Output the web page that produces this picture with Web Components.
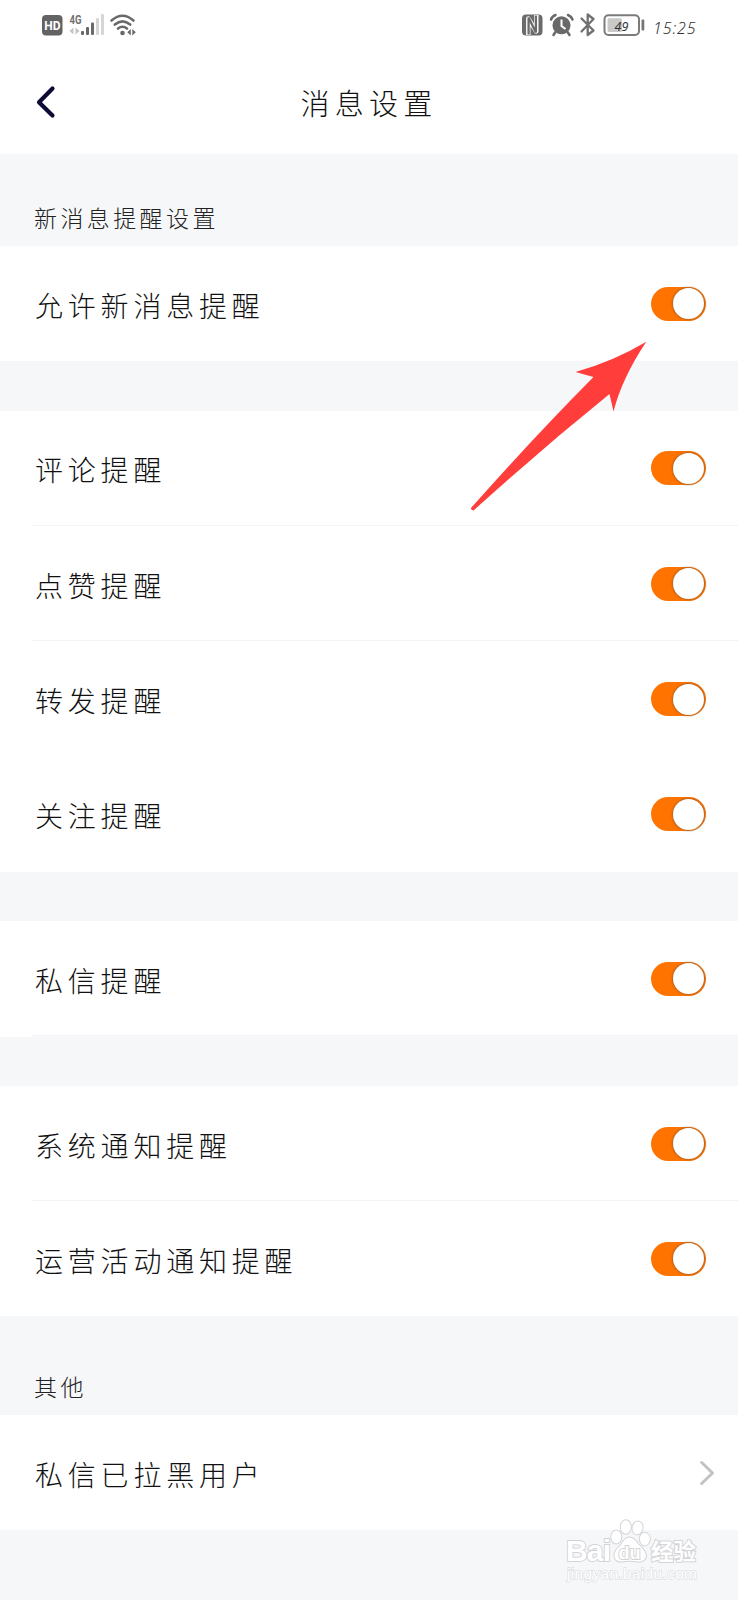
<!DOCTYPE html>
<html lang="zh-CN">
<head>
<meta charset="utf-8">
<title>消息设置</title>
<style>
html,body{margin:0;padding:0;background:#f6f7f9}
body{width:738px;height:1600px;overflow:hidden;font-family:"Noto Sans CJK SC","Noto Sans",sans-serif}
</style>
</head>
<body>
<settings-page></settings-page>
<script>
const define = (name, html) => customElements.define(name, class extends HTMLElement {
  constructor() {
    super();
    const t = document.createElement('template');
    t.innerHTML = html;
    this.attachShadow({mode: 'open'}).append(t.content.cloneNode(true));
  }
});

define('status-bar', `
<style>
:host{display:flex;justify-content:space-between;height:50px;padding:0 41px 0 42px;box-sizing:border-box}
svg{display:block}
.right{display:flex}
time{font:italic 300 16px/20px "Noto Sans",sans-serif;letter-spacing:.9px;color:#333;margin:18px 0 0 8px;width:44px;white-space:nowrap}
</style>
<svg width="96" height="50" viewBox="42 0 96 50">
  <rect x="42" y="15" width="20.5" height="20.5" rx="4" fill="#636363"/>
  <text x="52.3" y="29.6" font-family="Roboto,sans-serif" font-size="12" font-weight="700" fill="#fff" text-anchor="middle">HD</text>
  <text x="69.5" y="23.5" font-family="Roboto,sans-serif" font-size="13" font-weight="700" fill="#707070" textLength="12" lengthAdjust="spacingAndGlyphs">4G</text>
  <path d="M73.5 27.5v7l-4-3.5zM75.5 27.5v7l4-3.5z" fill="#c4c4c4"/>
  <g fill="#696969"><rect x="81" y="31" width="3" height="4" rx="1"/><rect x="86" y="27" width="3" height="8" rx="1"/><rect x="91" y="22.5" width="3" height="12.5" rx="1"/></g>
  <g fill="#d6d6d6"><rect x="96" y="18" width="3" height="17" rx="1"/><rect x="101" y="14" width="3" height="21" rx="1"/></g>
  <g fill="none" stroke="#696969" stroke-width="2.6" stroke-linecap="round"><path d="M111.5 20.5Q122.5 11 133.5 20.5"/><path d="M114.800 24.600Q122.500 18 130.200 24.600"/><path d="M118 28.500Q122.500 25 127 28.500"/></g>
  <circle cx="122.5" cy="33" r="2.3" fill="#696969"/>
  <path d="M130.800 29v6.500l-3.500-3.200zM132.300 29v6.500l3.500-3.200z" fill="#696969"/>
</svg>
<div class="right">
<svg width="124" height="50" viewBox="521 0 124 50">
  <rect x="522" y="14.5" width="20.5" height="21" rx="4" fill="#6b6b6b"/>
  <path d="M528.300 35V18.500L536.300 31.500V15" fill="none" stroke="#fff" stroke-width="4.400" stroke-linejoin="round"/>
  <path d="M528.600 34.500V17.500L535.900 32.500V15.500" fill="none" stroke="#6b6b6b" stroke-width="2.300"/>
  <circle cx="561.5" cy="25.3" r="9" fill="#696969"/>
  <path d="M551 19.500q1-3 4.500-4.500M568 15q3.500 1.500 4.500 4.500M555.500 32l-2 3M567.500 32l2 3" fill="none" stroke="#696969" stroke-width="2.500" stroke-linecap="round"/>
  <path d="M561.500 19.500v6.500l4 3" fill="none" stroke="#fff" stroke-width="2"/>
  <path d="M581.500 18.500L593.500 30.500L587.700 35V14.500L593.500 19L581.500 31.500" fill="none" stroke="#707070" stroke-width="2.300" stroke-linejoin="round" stroke-linecap="round"/>
  <rect x="604.5" y="15.3" width="34.5" height="19.7" rx="4" fill="#fff" stroke="#7b7b7b" stroke-width="2"/>
  <rect x="607.5" y="18.3" width="14.5" height="13.7" rx="1.5" fill="#c9c9c9"/>
  <text x="621.5" y="30.5" font-family="Noto Sans,sans-serif" font-size="12.5" font-style="italic" fill="#333" text-anchor="middle">49</text>
  <rect x="641.5" y="19.5" width="2.8" height="11" rx="1" fill="#777"/>
</svg>
<time>15:25</time>
</div>`);

define('nav-header', `
<style>
:host{display:grid;grid-template-columns:90px 1fr 90px;align-items:center;height:103.5px}
svg{display:block;margin-left:34px}
h1{margin:0;text-align:center;font-size:29px;font-weight:300;letter-spacing:5.2px;line-height:40px;color:#111}
</style>
<svg width="24" height="36" viewBox="0 0 24 36"><path d="M18.500 4.500L5 18.200L18.500 31.500" fill="none" stroke="#0d0a35" stroke-width="4.200" stroke-linecap="round" stroke-linejoin="round"/></svg>
<h1><slot></slot></h1>`);

define('group-label', `
<style>
:host{display:flex;align-items:flex-end;height:var(--h,92.7px);padding:0 34px 13px;box-sizing:border-box;font-size:23px;font-weight:300;letter-spacing:3.4px;line-height:32px;color:#222}
</style><slot></slot>`);

define('toggle-switch', `
<style>
:host{display:flex;justify-content:flex-end;width:54.5px;height:34px;border-radius:17px;background:#ff7300;box-sizing:border-box;padding:1.5px}
i{display:block;width:31px;height:31px;border-radius:50%;background:#fff;box-shadow:0 0 2px .8px rgba(125,85,50,.65)}
</style><i></i>`);

define('setting-row', `
<style>
:host{display:flex;align-items:center;justify-content:space-between;height:115.3px;padding:0 32.5px 0 35px;box-sizing:border-box;background:#fff}
:host([line]){background:linear-gradient(#f3f3f5,#f3f3f5) 32px 100%/100% 1.5px no-repeat,#fff}
span{font-size:28px;font-weight:300;letter-spacing:4.8px;line-height:40px;color:#111;padding-top:2px}
</style><span><slot></slot></span><slot name="end"><toggle-switch></toggle-switch></slot>`);

define('setting-group', `
<style>:host{display:block;margin-bottom:49.3px}:host([last]){margin-bottom:0}</style><slot></slot>`);

define('pointer-arrow', `
<style>:host{position:absolute;left:466px;top:338px}svg{display:block}</style>
<svg width="186" height="178" viewBox="466 338 186 178"><path d="M646.300 341.700Q614 361 575.500 372L593.500 377Q533 438 471 508Q470.500 510 473.500 510.500Q539 451 609.500 394L613.500 411.500Q622 378 646.300 341.700Z" fill="#ff3e3c"/></svg>`);

define('baidu-mark', `
<style>:host{position:absolute;left:560px;top:1516px}svg{display:block}</style>
<svg width="150" height="74" viewBox="560 1516 150 74" fill="#fff" stroke="#d3d4d7" stroke-width="2" paint-order="stroke">
  <text x="566" y="1561" font-family="Liberation Sans,sans-serif" font-weight="700" font-size="30" textLength="45">Bai</text>
  <ellipse cx="616.3" cy="1537" rx="5" ry="6.5"/><ellipse cx="625.8" cy="1527" rx="5" ry="6.8"/><ellipse cx="637.5" cy="1527.8" rx="5" ry="6.5" transform="rotate(8 637 1528)"/><ellipse cx="644.8" cy="1539" rx="5" ry="6.3"/>
  <path d="M629.500 1537.500Q634 1537.500 638 1544Q646 1551 646 1556Q645 1562 637 1561.500Q629 1560 622 1561.500Q614.500 1562 614.300 1555Q615 1550 620.500 1545.500Q625 1537.500 629.500 1537.500Z"/>
  <text x="629.5" y="1558.5" font-family="Liberation Sans,sans-serif" font-weight="700" font-size="18" text-anchor="middle">du</text>
  <text x="651" y="1559.5" font-family="Noto Sans CJK SC,sans-serif" font-weight="700" font-size="22.5" textLength="45">经验</text>
  <text x="567" y="1579" font-family="Liberation Sans,sans-serif" font-size="15.5" textLength="130" stroke-width="1.3" stroke="#dedfe2">jingyan.baidu.com</text>
</svg>`);

define('settings-page', `
<style>
:host{display:block;position:relative;width:738px;height:1600px;background:#f6f7f9;overflow:hidden}
header{background:#fff}
.chev{display:block;margin-right:-14px}
</style>
<header><status-bar></status-bar><nav-header>消息设置</nav-header></header>
<group-label>新消息提醒设置</group-label>
<setting-group><setting-row>允许新消息提醒</setting-row></setting-group>
<setting-group>
  <setting-row line>评论提醒</setting-row>
  <setting-row line>点赞提醒</setting-row>
  <setting-row>转发提醒</setting-row>
  <setting-row>关注提醒</setting-row>
</setting-group>
<setting-group><setting-row line>私信提醒</setting-row></setting-group>
<setting-group last>
  <setting-row line>系统通知提醒</setting-row>
  <setting-row>运营活动通知提醒</setting-row>
</setting-group>
<group-label style="--h:98.7px">其他</group-label>
<setting-group last><setting-row>私信已拉黑用户<svg slot="end" class="chev" width="20" height="28" viewBox="0 0 20 28"><path d="M1.700 3.500L12.500 14L1.700 24.500" fill="none" stroke="#c2c2c2" stroke-width="3" stroke-linecap="round" stroke-linejoin="round"/></svg></setting-row></setting-group>
<pointer-arrow></pointer-arrow>
<baidu-mark></baidu-mark>`);
</script>
</body>
</html>
